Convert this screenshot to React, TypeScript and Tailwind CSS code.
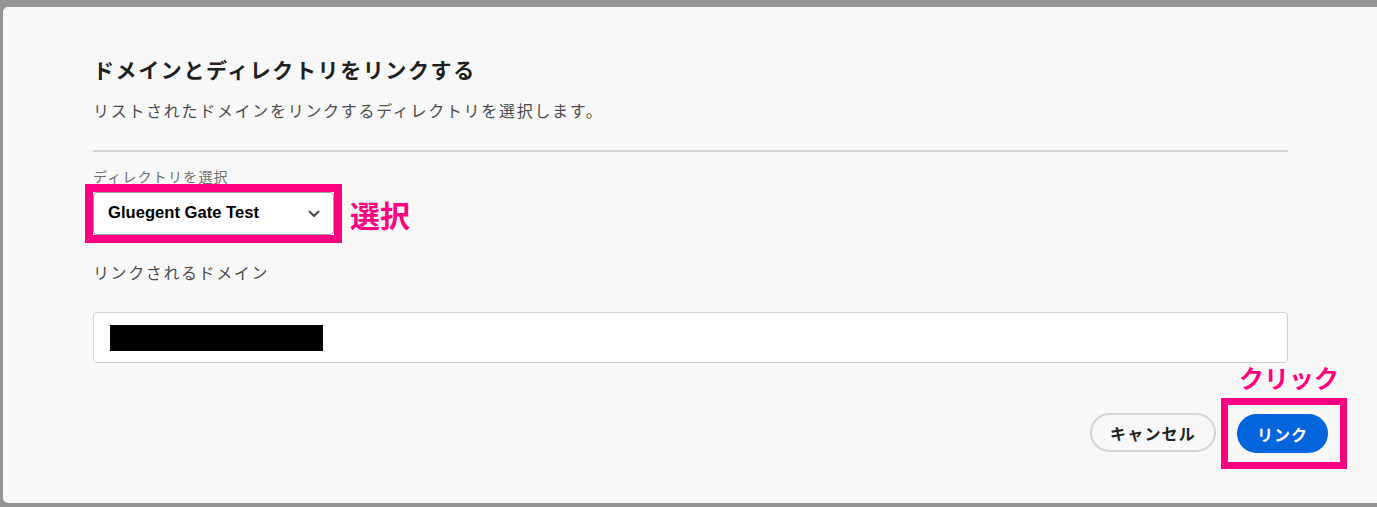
import React from 'react';

const jp = { fontFamily: '"Noto Sans CJK JP", "Noto Sans", sans-serif' };

export default function App() {
  return (
    <div className="w-[1377px] h-[507px] bg-[#959595] pt-[7px] pl-[3px] overflow-hidden" style={jp}>
      <div className="h-[496px] bg-[#f8f8f8] rounded-l-[5px] pl-[90px] pr-[30px] pt-[48px]">
        {/* Main content */}
        <div className="pr-[59px]">
          <h2 className="text-[21px] leading-[28px] font-bold text-[#1f1f1f] tracking-[1.6px]">
            ドメインとディレクトリをリンクする
          </h2>
          <p className="mt-[16px] text-[16px] leading-[22px] text-[#4b4b4b] tracking-[1.7px]">
            リストされたドメインをリンクするディレクトリを選択します。
          </p>
          <div className="mt-[29px] h-[2px] bg-[#d5d5d5]" />

          <div className="mt-[17px] text-[14px] leading-[15px] text-[#6e6e6e] tracking-[1.2px]">
            ディレクトリを選択
          </div>
          <div className="flex items-center -ml-[8px]">
            <div className="border-[8px] border-[#ff0080]">
              <button className="w-[241px] h-[43px] bg-white border border-[#a0a0a0] rounded-[4px] flex items-center justify-between pl-[14px] pr-[13px]">
                <span
                  className="text-[16.6px] font-bold text-black"
                  style={{ fontFamily: '"Liberation Sans", Arial, sans-serif' }}
                >
                  Gluegent Gate Test
                </span>
                <svg width="12" height="8" viewBox="0 0 12 8" fill="none">
                  <path d="M1.5 1.5 L6 6 L10.5 1.5" stroke="#4b4b4b" strokeWidth="2" strokeLinecap="round" strokeLinejoin="round" />
                </svg>
              </button>
            </div>
            <span className="ml-[8px] text-[30px] leading-none font-bold text-[#ff0080]">選択</span>
          </div>

          <div className="mt-[18px] text-[16px] leading-[22px] text-[#4b4b4b] tracking-[1.6px]">
            リンクされるドメイン
          </div>
          <div className="mt-[29px] h-[51px] bg-white border border-[#d0d0d0] rounded-[4px] flex items-center pl-[16px]">
            <div className="w-[213px] h-[26px] bg-black" />
          </div>
        </div>

        {/* Footer */}
        <div className="flex justify-end items-end">
          <button className="mb-[17px] mr-[5px] w-[126px] h-[39px] rounded-full border-2 border-[#d5d5d5] text-[16px] font-bold text-[#222] tracking-[1.2px]">
            キャンセル
          </button>
          <div className="flex flex-col items-center">
            <span className="text-[25px] leading-[28px] font-bold text-[#ff0080] ml-[10px]">クリック</span>
            <div className="mt-[7px] border-[7px] border-[#ff0080] pl-[9px] pr-[12px] py-[9px]">
              <button className="w-[91px] h-[39px] rounded-full bg-[#0265dc] text-white text-[16px] font-bold tracking-[1px]">
                リンク
              </button>
            </div>
          </div>
        </div>
      </div>
    </div>
  );
}
